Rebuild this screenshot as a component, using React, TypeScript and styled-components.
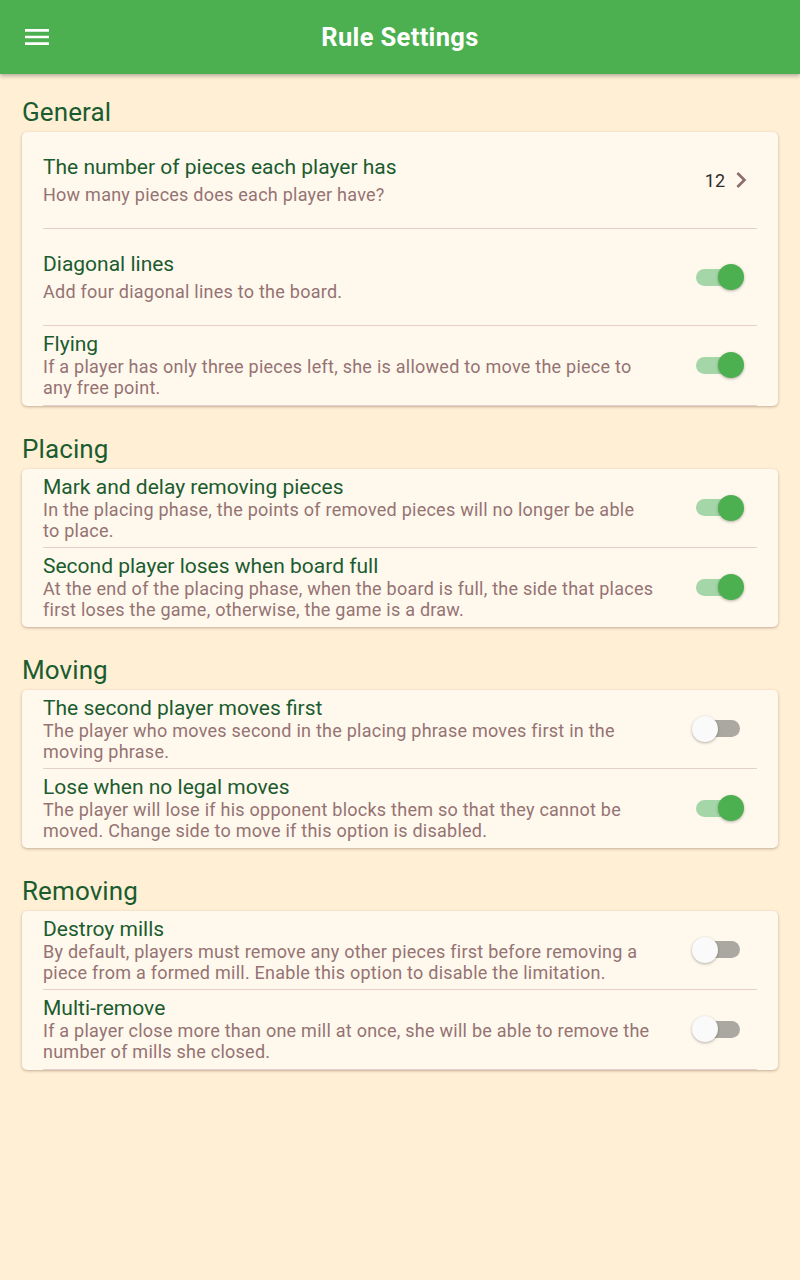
import React from "react";
import styled, { createGlobalStyle } from "styled-components";

const GlobalStyle = createGlobalStyle`
  html, body { margin: 0; padding: 0; }
  body {
    background: #ffefd5;
    font-family: Roboto, "Noto Sans", sans-serif;
    -webkit-font-smoothing: antialiased;
  }
`;

const Page = styled.div`
  min-height: 1280px;
  background: #ffefd5;
`;

const AppBar = styled.header`
  height: 74px;
  background: #4caf50;
  box-shadow: 0 2px 4px rgba(0, 0, 0, 0.28);
  display: grid;
  grid-template-columns: 1fr auto 1fr;
  align-items: center;
  position: relative;
  z-index: 1;
`;

const MenuButton = styled.button`
  justify-self: start;
  margin-left: 21px;
  width: 32px;
  height: 32px;
  padding: 0;
  border: none;
  background: none;
  display: flex;
  color: #fff;
`;

const Title = styled.h1`
  margin: 0;
  color: #fff;
  font-size: 25.5px;
  font-weight: 700;
  letter-spacing: 0.35px;
`;

const Content = styled.main`
  padding: 24px 22px 40px;
  display: flex;
  flex-direction: column;
`;

const SectionHeader = styled.h2<{ $first?: boolean }>`
  margin: ${(p) => (p.$first ? "0" : "29px")} 0 6px;
  font-size: 26px;
  line-height: 28px;
  font-weight: 400;
  letter-spacing: 0.1px;
  color: #1a5c2f;
`;

const Card = styled.section`
  background: #fff8ed;
  border-radius: 5px;
  box-shadow: 0 1px 3px rgba(80, 50, 30, 0.35);
  padding: 0 21px;
`;

const Row = styled.div<{ $tall?: boolean; $divider?: boolean }>`
  display: flex;
  align-items: center;
  gap: 38px;
  min-height: ${(p) => (p.$tall ? "97px" : "auto")};
  padding: ${(p) => (p.$tall ? "0" : "6.25px 0")};
  border-bottom: ${(p) => (p.$divider ? "1px solid #e5cfcb" : "none")};
  box-sizing: border-box;
`;

const TextCol = styled.div<{ $tall?: boolean }>`
  flex: 1;
  display: flex;
  flex-direction: column;
  gap: ${(p) => (p.$tall ? "4.5px" : "0")};
`;

const ItemTitle = styled.div`
  font-size: 21px;
  line-height: 24px;
  color: #1a5c2f;
`;

const ItemSubtitle = styled.div`
  font-size: 18px;
  line-height: 21px;
  letter-spacing: 0.25px;
  color: #957373;
`;

const Trailing = styled.div`
  width: 65px;
  display: flex;
  align-items: center;
  justify-content: flex-end;
`;

const ValueText = styled.span`
  font-size: 18px;
  color: #2e2e2e;
`;

const SwitchBox = styled.div`
  position: relative;
  width: 52px;
  height: 26px;
  margin-right: 13px;
`;

const Track = styled.div<{ $on: boolean }>`
  position: absolute;
  left: 4px;
  right: 4px;
  top: 4.5px;
  height: 17px;
  border-radius: 9px;
  background: ${(p) => (p.$on ? "#a5d6a7" : "#aba8a1")};
`;

const Thumb = styled.div<{ $on: boolean }>`
  position: absolute;
  top: 0;
  left: ${(p) => (p.$on ? "26px" : "0")};
  width: 26px;
  height: 26px;
  border-radius: 50%;
  background: ${(p) => (p.$on ? "#4caf50" : "#fafafa")};
  box-shadow: 0 1px 3px rgba(0, 0, 0, 0.3);
`;

const Toggle = ({ on }: { on: boolean }) => (
  <SwitchBox>
    <Track $on={on} />
    <Thumb $on={on} />
  </SwitchBox>
);

const MenuIcon = () => (
  <svg width="32" height="32" viewBox="0 0 24 24" fill="currentColor">
    <path d="M3 18h18v-2H3v2zm0-5h18v-2H3v2zm0-7v2h18V6H3z" />
  </svg>
);

const Chevron = () => (
  <svg width="32" height="32" viewBox="0 0 24 24" fill="#8d6b6e">
    <path d="M10 6L8.59 7.41 13.17 12l-4.58 4.59L10 18l6-6z" />
  </svg>
);

type Item = {
  title: string;
  subtitle: string;
  on?: boolean;
  value?: string;
  tall?: boolean;
  divider?: boolean;
};

type Section = { name: string; items: Item[] };

const sections: Section[] = [
  {
    name: "General",
    items: [
      {
        title: "The number of pieces each player has",
        subtitle: "How many pieces does each player have?",
        value: "12",
        tall: true,
        divider: true,
      },
      {
        title: "Diagonal lines",
        subtitle: "Add four diagonal lines to the board.",
        on: true,
        tall: true,
        divider: true,
      },
      {
        title: "Flying",
        subtitle:
          "If a player has only three pieces left, she is allowed to move the piece to any free point.",
        on: true,
        divider: true,
      },
    ],
  },
  {
    name: "Placing",
    items: [
      {
        title: "Mark and delay removing pieces",
        subtitle:
          "In the placing phase, the points of removed pieces will no longer be able to place.",
        on: true,
        divider: true,
      },
      {
        title: "Second player loses when board full",
        subtitle:
          "At the end of the placing phase, when the board is full, the side that places first loses the game, otherwise, the game is a draw.",
        on: true,
      },
    ],
  },
  {
    name: "Moving",
    items: [
      {
        title: "The second player moves first",
        subtitle:
          "The player who moves second in the placing phrase moves first in the moving phrase.",
        on: false,
        divider: true,
      },
      {
        title: "Lose when no legal moves",
        subtitle:
          "The player will lose if his opponent blocks them so that they cannot be moved. Change side to move if this option is disabled.",
        on: true,
      },
    ],
  },
  {
    name: "Removing",
    items: [
      {
        title: "Destroy mills",
        subtitle:
          "By default, players must remove any other pieces first before removing a piece from a formed mill. Enable this option to disable the limitation.",
        on: false,
        divider: true,
      },
      {
        title: "Multi-remove",
        subtitle:
          "If a player close more than one mill at once, she will be able to remove the number of mills she closed.",
        on: false,
        divider: true,
      },
    ],
  },
];

export default function App() {
  return (
    <Page>
      <GlobalStyle />
      <AppBar>
        <MenuButton aria-label="menu">
          <MenuIcon />
        </MenuButton>
        <Title>Rule Settings</Title>
        <span />
      </AppBar>
      <Content>
        {sections.map((s, si) => (
          <React.Fragment key={s.name}>
            <SectionHeader $first={si === 0}>{s.name}</SectionHeader>
            <Card>
              {s.items.map((it) => (
                <Row key={it.title} $tall={it.tall} $divider={it.divider}>
                  <TextCol $tall={it.tall}>
                    <ItemTitle>{it.title}</ItemTitle>
                    <ItemSubtitle>{it.subtitle}</ItemSubtitle>
                  </TextCol>
                  <Trailing>
                    {it.value ? (
                      <>
                        <ValueText>{it.value}</ValueText>
                        <Chevron />
                      </>
                    ) : (
                      <Toggle on={!!it.on} />
                    )}
                  </Trailing>
                </Row>
              ))}
            </Card>
          </React.Fragment>
        ))}
      </Content>
    </Page>
  );
}
